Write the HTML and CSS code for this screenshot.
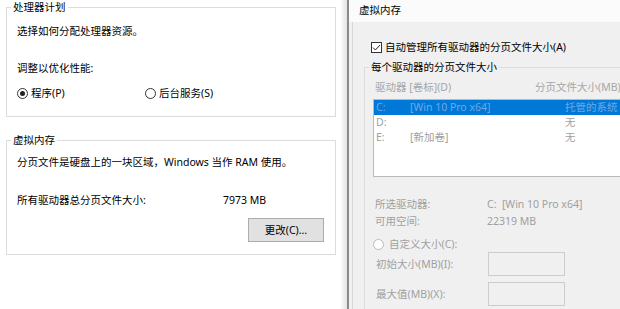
FILE: index.html
```html
<!DOCTYPE html>
<html lang="zh-CN">
<head>
<meta charset="utf-8">
<title>虚拟内存</title>
<link rel="stylesheet" href="styles.css">
</head>
<body>
<div class="screen">
  <div class="perf">
    <fieldset class="group g1">
      <legend>处理器计划</legend>
      <p class="line l1">选择如何分配处理器资源。</p>
      <p class="line l2">调整以优化性能:</p>
      <div class="radios">
        <span class="radio"><span class="dot checked"></span>程序(P)</span>
        <span class="radio"><span class="dot"></span>后台服务(S)</span>
      </div>
    </fieldset>
    <fieldset class="group g2">
      <legend>虚拟内存</legend>
      <p class="line l3">分页文件是硬盘上的一块区域，Windows 当作 RAM 使用。</p>
      <div class="line total"><span class="total-label">所有驱动器总分页文件大小:</span><span>7973 MB</span></div>
      <div class="btnrow"><button class="btn">更改(C)...</button></div>
    </fieldset>
  </div>
  <div class="shadow"></div>
  <div class="vm">
    <div class="titlebar">虚拟内存</div>
    <div class="vm-body">
      <div class="line auto">
        <span class="check"><svg width="11" height="11" viewBox="0 0 11 11"><path d="M2 5.6 L4.4 8 L9 3" fill="none" stroke="#222" stroke-width="1"/></svg></span>
        自动管理所有驱动器的分页文件大小(A)
      </div>
      <fieldset class="vgroup">
        <legend>每个驱动器的分页文件大小</legend>
        <div class="line header"><span class="h1">驱动器 [卷标](D)</span><span>分页文件大小(MB)</span></div>
        <div class="listbox">
          <div class="row sel"><span class="c1">C:</span><span class="c2">[Win 10 Pro x64]</span><span>托管的系统</span></div>
          <div class="row"><span class="c1">D:</span><span class="c2"></span><span>无</span></div>
          <div class="row"><span class="c1">E:</span><span class="c2">[新加卷]</span><span>无</span></div>
        </div>
        <div class="line info i1"><span class="info-label">所选驱动器:</span><span>C:&nbsp; [Win 10 Pro x64]</span></div>
        <div class="line info i2"><span class="info-label">可用空间:</span><span>22319 MB</span></div>
        <div class="line custom"><span class="dot dis"></span>自定义大小(C):</div>
        <div class="field f1"><span class="field-label">初始大小(MB)(I):</span><span class="input"></span></div>
        <div class="field f2"><span class="field-label">最大值(MB)(X):</span><span class="input"></span></div>
      </fieldset>
    </div>
  </div>
</div>
</body>
</html>
```
FILE: styles.css
```css
html, body {
  margin: 0;
  padding: 0;
}
body {
  width: 620px;
  height: 309px;
  overflow: hidden;
  font-family: "Noto Sans", "Noto Sans CJK SC", sans-serif;
  font-size: 10.5px;
  line-height: 14px;
  color: #000;
  background: #fff;
}
.screen {
  display: flex;
  width: 620px;
  height: 309px;
}
.perf {
  width: 340px;
  flex: none;
  background: #fff;
  padding-left: 6px;
  box-sizing: border-box;
}
.line {
  margin: 0;
  height: 14px;
  white-space: nowrap;
}
.group {
  margin: 0;
  padding: 0 0 0 10px;
  width: 330px;
  box-sizing: border-box;
  border: 1px solid #dcdcdc;
  min-inline-size: 0;
}
.group legend {
  margin-left: -6px;
  padding: 0 2px;
  line-height: 14px;
}
.vgroup legend {
  margin-left: -4px;
  padding: 0 2px;
  line-height: 14px;
}
.g1 { padding-bottom: 16px; }
.l1 { margin-top: 10px; }
.l2 { margin-top: 23px; }
.radios {
  margin-top: 11px;
  display: grid;
  grid-template-columns: 128px auto;
  height: 14px;
}
.radio {
  display: flex;
  align-items: center;
  gap: 3px;
  white-space: nowrap;
}
.dot {
  width: 11px;
  height: 11px;
  box-sizing: border-box;
  border: 1px solid #333;
  border-radius: 50%;
  background: #fff;
  display: inline-flex;
  align-items: center;
  justify-content: center;
  flex: none;
}
.dot.checked::after {
  content: "";
  width: 5px;
  height: 5px;
  border-radius: 50%;
  background: #222;
}
.g2 {
  margin-top: 16px;
  padding-bottom: 12px;
}
.l3 { margin-top: 8px; }
.total {
  margin-top: 24px;
  display: flex;
}
.total-label { width: 206px; }
.btnrow {
  margin-top: 11px;
  display: flex;
  justify-content: flex-end;
  padding-right: 11px;
}
.btn {
  width: 76px;
  height: 24px;
  margin: 0;
  padding: 0;
  font: inherit;
  color: #000;
  background: #e1e1e1;
  border: 1px solid #adadad;
}
.shadow {
  width: 7px;
  flex: none;
  background: linear-gradient(to right, #fff, #e2e2e2);
}
.vm {
  flex: 1;
  min-width: 0;
  overflow: hidden;
  border-left: 2px solid #8a8a8a;
  background: #f0f0f0;
  display: flex;
  flex-direction: column;
}
.titlebar {
  height: 22px;
  line-height: 20px;
  padding-left: 10px;
  background: #fbfbfb;
  flex: none;
}
.vm-body {
  flex: 1;
  margin-left: 3px;
  border-left: 1px solid #d8d8d8;
  background: #f0f0f0;
}
.auto {
  margin-top: 18px;
  padding-left: 18px;
  display: flex;
  align-items: center;
  gap: 2px;
}
.check {
  width: 11px;
  height: 11px;
  box-sizing: border-box;
  border: 1px solid #333;
  background: #fff;
  display: inline-flex;
  flex: none;
  margin-right: 1px;
}
.check svg {
  display: block;
  margin: -1px;
}
.vgroup {
  margin: 6px 0 0 11px;
  padding: 0 0 0 8px;
  width: 300px;
  box-sizing: border-box;
  border: 1px solid #dcdcdc;
  border-right: none;
  min-inline-size: 0;
  height: 260px;
}
.header {
  margin-top: 6px;
  padding-left: 2px;
  display: flex;
  color: #a6a6a6;
}
.h1 { width: 160px; }
.listbox {
  margin-top: 5px;
  height: 78px;
  box-sizing: border-box;
  border: 1px solid #b9b9b9;
  border-right: none;
  background: #fff;
}
.row {
  height: 15px;
  line-height: 15px;
  padding-left: 2px;
  display: flex;
  white-space: nowrap;
  color: #a0a0a0;
}
.row.sel {
  background: #0078d7;
  color: #6fa8e4;
}
.c1 { width: 34px; flex: none; }
.c2 { width: 155px; flex: none; }
.info {
  display: flex;
  padding-left: 2px;
  color: #a0a0a0;
}
.i1 { margin-top: 20px; }
.i2 { margin-top: 3px; }
.info-label { width: 112px; flex: none; }
.custom {
  margin-top: 9px;
  display: flex;
  align-items: center;
  gap: 5px;
  color: #a0a0a0;
}
.dot.dis {
  border-color: #bcbcbc;
  background: #fff;
}
.field {
  display: flex;
  align-items: center;
  height: 24px;
  padding-left: 3px;
  color: #a0a0a0;
  white-space: nowrap;
}
.f1 { margin-top: 1px; }
.f2 { margin-top: 6px; }
.field-label { width: 112px; flex: none; }
.input {
  width: 77px;
  height: 24px;
  box-sizing: border-box;
  border: 1px solid #cccccc;
  background: #f0f0f0;
  flex: none;
}
```
